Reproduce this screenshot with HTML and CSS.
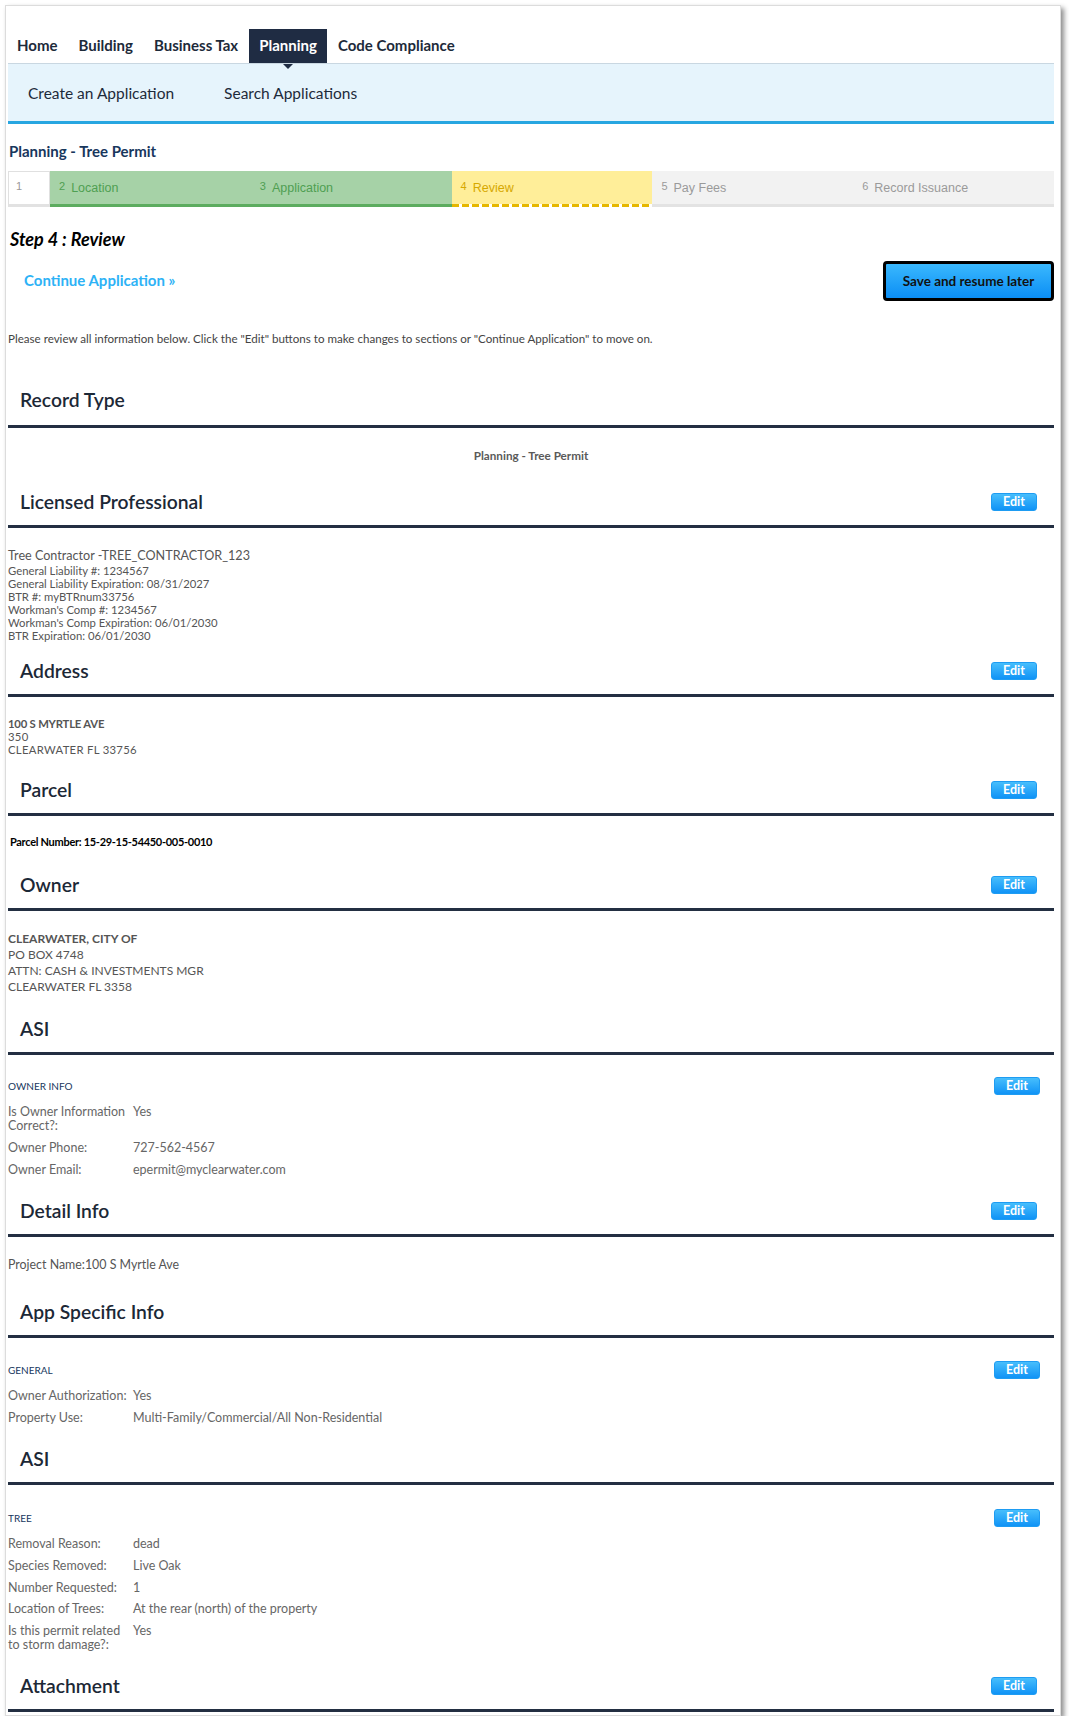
FILE: index.html
```html
<!DOCTYPE html>
<html lang="en">
<head>
<meta charset="utf-8">
<title>Planning - Tree Permit - Review</title>
<link rel="stylesheet" href="styles.css">
</head>
<body>
<div class="frame">
  <nav class="tabs">
    <a class="tab" href="#">Home</a>
    <a class="tab" href="#">Building</a>
    <a class="tab" href="#">Business Tax</a>
    <a class="tab active" href="#">Planning</a>
    <a class="tab" href="#">Code Compliance</a>
  </nav>
  <div class="subnav">
    <a href="#">Create an Application</a>
    <a href="#">Search Applications</a>
  </div>

  <h1 class="page-title">Planning - Tree Permit</h1>

  <ol class="steps">
    <li class="step first"><span class="num">1</span></li>
    <li class="step done"><span class="num">2</span>Location</li>
    <li class="step done"><span class="num">3</span>Application</li>
    <li class="step current"><span class="num">4</span>Review</li>
    <li class="step todo"><span class="num">5</span>Pay Fees</li>
    <li class="step todo"><span class="num">6</span>Record Issuance</li>
  </ol>

  <h2 class="step-title">Step 4 : Review</h2>

  <div class="actions">
    <a class="continue" href="#">Continue Application »</a>
    <button class="save" type="button">Save and resume later</button>
  </div>

  <p class="instructions">Please review all information below. Click the "Edit" buttons to make changes to sections or "Continue Application" to move on.</p>

  <section class="sec sec-record">
    <div class="sec-head"><h3>Record Type</h3></div>
    <div class="sec-body body-record">Planning - Tree Permit</div>
  </section>

  <section class="sec">
    <div class="sec-head"><h3>Licensed Professional</h3><button class="edit" type="button">Edit</button></div>
    <div class="sec-body body-lp">
      <div class="lp-name">Tree Contractor -TREE_CONTRACTOR_123</div>
      <div>General Liability #: 1234567</div>
      <div>General Liability Expiration: 08/31/2027</div>
      <div>BTR #: myBTRnum33756</div>
      <div>Workman's Comp #: 1234567</div>
      <div>Workman's Comp Expiration: 06/01/2030</div>
      <div>BTR Expiration: 06/01/2030</div>
    </div>
  </section>

  <section class="sec">
    <div class="sec-head"><h3>Address</h3><button class="edit" type="button">Edit</button></div>
    <div class="sec-body body-address">
      <div class="strong">100 S MYRTLE AVE</div>
      <div>350</div>
      <div>CLEARWATER FL 33756</div>
    </div>
  </section>

  <section class="sec">
    <div class="sec-head"><h3>Parcel</h3><button class="edit" type="button">Edit</button></div>
    <div class="sec-body body-parcel">Parcel Number: 15-29-15-54450-005-0010</div>
  </section>

  <section class="sec">
    <div class="sec-head"><h3>Owner</h3><button class="edit" type="button">Edit</button></div>
    <div class="sec-body body-owner">
      <div class="strong">CLEARWATER, CITY OF</div>
      <div>PO BOX 4748</div>
      <div>ATTN: CASH &amp; INVESTMENTS MGR</div>
      <div>CLEARWATER FL 3358</div>
    </div>
  </section>

  <section class="sec">
    <div class="sec-head"><h3>ASI</h3></div>
    <div class="sec-body body-asi">
      <div class="sub-head"><span>OWNER INFO</span><button class="edit" type="button">Edit</button></div>
      <dl class="kv">
        <dt>Is Owner Information Correct?:</dt><dd>Yes</dd>
        <dt>Owner Phone:</dt><dd>727-562-4567</dd>
        <dt>Owner Email:</dt><dd>epermit@myclearwater.com</dd>
      </dl>
    </div>
  </section>

  <section class="sec">
    <div class="sec-head"><h3>Detail Info</h3><button class="edit" type="button">Edit</button></div>
    <div class="sec-body body-detail">Project Name:100 S Myrtle Ave</div>
  </section>

  <section class="sec">
    <div class="sec-head"><h3>App Specific Info</h3></div>
    <div class="sec-body body-app">
      <div class="sub-head"><span>GENERAL</span><button class="edit" type="button">Edit</button></div>
      <dl class="kv">
        <dt>Owner Authorization:</dt><dd>Yes</dd>
        <dt>Property Use:</dt><dd>Multi-Family/Commercial/All Non-Residential</dd>
      </dl>
    </div>
  </section>

  <section class="sec">
    <div class="sec-head"><h3>ASI</h3></div>
    <div class="sec-body body-tree">
      <div class="sub-head"><span>TREE</span><button class="edit" type="button">Edit</button></div>
      <dl class="kv">
        <dt>Removal Reason:</dt><dd>dead</dd>
        <dt>Species Removed:</dt><dd>Live Oak</dd>
        <dt>Number Requested:</dt><dd>1</dd>
        <dt>Location of Trees:</dt><dd>At the rear (north) of the property</dd>
        <dt>Is this permit related to storm damage?:</dt><dd>Yes</dd>
      </dl>
    </div>
  </section>

  <section class="sec">
    <div class="sec-head"><h3>Attachment</h3><button class="edit" type="button">Edit</button></div>
  </section>
</div>
</body>
</html>
```

FILE: styles.css
```css
* { box-sizing: border-box; }

html, body {
  margin: 0;
  padding: 0;
  background: #fff;
}

body {
  font-family: "Lato", "Liberation Sans", sans-serif;
  color: #555;
}

.frame {
  margin: 5px 0 0 5px;
  width: 1056px;
  border: 1px solid #dcdcdc;
  box-shadow: 3px 3px 5px rgba(0, 0, 0, 0.45);
  padding: 23px 6px 3px 2px;
  background: #fff;
}

/* top tabs */
.tabs {
  display: flex;
  height: 35px;
  border-bottom: 1px solid #c9d7e1;
}

.tab {
  position: relative;
  display: flex;
  align-items: center;
  padding: 0 10px 2px;
  margin-right: 1px;
  font-size: 15px;
  font-weight: 700;
  color: #1d2a3a;
  text-decoration: none;
}

.tab:first-child { margin-left: -1px; }

.tab.active {
  background: #1f2c43;
  color: #fff;
}

.tab.active::after {
  content: "";
  position: absolute;
  left: 50%;
  bottom: -6px;
  margin-left: -5px;
  border-left: 5px solid transparent;
  border-right: 5px solid transparent;
  border-top: 5px solid #1f2c43;
}

.subnav {
  display: flex;
  align-items: center;
  gap: 50px;
  height: 60px;
  padding-left: 20px;
  background: #e6f4fc;
  border-bottom: 3px solid #27a6e1;
}

.subnav a {
  font-size: 15.5px;
  color: #1d2a3a;
  text-decoration: none;
}

.page-title {
  margin: 17px 0 0;
  padding-left: 1px;
  font-size: 15px;
  line-height: 20px;
  font-weight: 700;
  color: #18375d;
}

/* progress steps */
.steps {
  list-style: none;
  display: flex;
  height: 36px;
  margin: 10px 0 0;
  padding: 0;
}

.step {
  flex: 1;
  display: flex;
  align-items: center;
  height: 36px;
  padding-left: 9px;
  font-family: "Liberation Sans", Arial, sans-serif;
  font-size: 12.5px;
  border-bottom: 3px solid transparent;
}

.step .num {
  font-size: 11px;
  margin-right: 6px;
  position: relative;
  top: -2px;
}

.step.first {
  flex: 0 0 42px;
  padding-left: 7px;
  background: #fff;
  border: 1px solid #e0e0e0;
  border-bottom: 3px solid #e2e2e2;
  color: #999;
}

.step.done {
  background: #a6d2a7;
  border-bottom-color: #5cac5f;
  color: #4f9f52;
}

.step.current {
  border-bottom: 0;
  padding-bottom: 3px;
  color: #d6a800;
  background:
    linear-gradient(#ffee99, #ffee99) top / 100% calc(100% - 3px) no-repeat,
    repeating-linear-gradient(90deg, #e5b700 0 7px, transparent 7px 10px) bottom / 100% 3px no-repeat;
}

.step.todo {
  background: #f2f2f2;
  border-bottom-color: #e3e3e3;
  color: #9a9a9a;
}

.step-title {
  margin: 20px 0 0;
  padding-left: 2px;
  font-size: 18px;
  line-height: 24px;
  font-weight: 700;
  font-style: italic;
  color: #000;
}

.actions {
  display: flex;
  align-items: center;
  justify-content: space-between;
  height: 40px;
  margin-top: 10px;
}

.continue {
  padding: 0 0 3px 16px;
  font-size: 15px;
  font-weight: 700;
  color: #2db2f6;
  text-decoration: none;
}

.save {
  width: 171px;
  height: 40px;
  padding: 0;
  border: 3px solid #000;
  border-radius: 4px;
  background: linear-gradient(#3ab8fd, #0b8ef5);
  font-family: inherit;
  font-size: 13.5px;
  font-weight: 700;
  color: #111;
}

.instructions {
  margin: 31px 0 0;
  font-size: 11.6px;
  line-height: 14px;
  color: #444;
}

/* review sections */
.sec-record { margin-top: 29px; }

.sec-head {
  display: flex;
  align-items: center;
  justify-content: space-between;
  height: 51px;
  padding: 2px 17px 0 12px;
  border-bottom: 3px solid #232f42;
}

.sec-record .sec-head {
  height: 53px;
  padding-top: 0;
}

.sec-head h3 {
  margin: 0;
  font-size: 19.3px;
  line-height: 24px;
  font-weight: 600;
  color: #1c2836;
}

.edit {
  width: 46px;
  height: 18px;
  padding: 0;
  border: 1px solid #1e9cf2;
  border-radius: 3px;
  background: linear-gradient(#47befc, #1093f6);
  font-family: inherit;
  font-size: 12.5px;
  line-height: 16px;
  font-weight: 700;
  color: #fff;
}

.sec-body {
  font-size: 11.3px;
  line-height: 13px;
  color: #555;
}

.strong { font-weight: 700; }

.body-record {
  padding: 20px 0 15px;
  text-align: center;
  font-size: 11.7px;
  line-height: 14px;
  font-weight: 700;
  color: #5a5a5a;
}

.body-lp { padding: 20px 0 4px; }
.body-lp .lp-name { font-size: 12.6px; line-height: 16px; }

.body-address {
  padding: 20px 0 9px;
  font-size: 11.3px;
  letter-spacing: 0.3px;
}

.body-address .strong { letter-spacing: -0.2px; }

.body-parcel {
  padding: 19px 0 11px 2px;
  font-size: 11px;
  line-height: 14px;
  font-weight: 700;
  color: #000;
  letter-spacing: -0.3px;
}

.body-owner {
  padding: 20px 0 9px;
  font-size: 12px;
  line-height: 16px;
}

.body-asi { padding: 21px 0 9px; }
.body-detail { padding: 21px 0 15px; font-size: 12.4px; line-height: 14px; }
.body-app { padding: 22px 0 9px; }
.body-tree { padding: 23px 0 9px; }

.sub-head {
  display: flex;
  align-items: center;
  justify-content: space-between;
  height: 20px;
  padding-right: 14px;
  font-size: 10px;
  color: #17375e;
}

.kv {
  display: grid;
  grid-template-columns: 124px 1fr;
  row-gap: 8px;
  margin: 9px 0 0;
  font-size: 12.5px;
  line-height: 14px;
  color: #666;
}

.body-tree .kv { row-gap: 7.8px; }

.kv dt, .kv dd { margin: 0; }
.kv dd { padding-left: 1px; }
```
